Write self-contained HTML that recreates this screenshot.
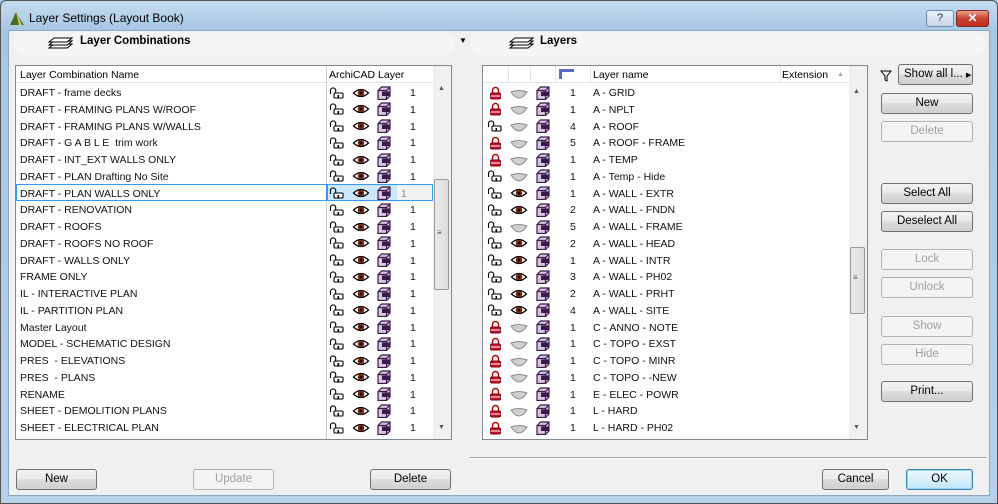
<!DOCTYPE html>
<html><head><meta charset="utf-8">
<style>
*{box-sizing:border-box;margin:0;padding:0}
body{width:998px;height:504px;overflow:hidden;background:#a9c8e4;font-family:"Liberation Sans",sans-serif;font-size:11px;color:#000;position:relative}
.frame{position:absolute;left:0;top:0;width:998px;height:504px;background:linear-gradient(#c4dbf0,#a7c6e3 30px,#b6d1ea);border:1px solid #555;border-radius:6px 6px 0 0}
.title{position:absolute;left:29px;top:11px;font-size:12px;color:#000}
.client{position:absolute;left:8px;top:30px;width:982px;height:466px;background:#f0f0f0;border:1px solid #8aa7c4}
.a{position:absolute}
.hbar{position:absolute;top:31px;height:25px;background:#f5f5f5;border-radius:12px}
.hb{font-weight:bold;font-size:11.5px}
.list{position:absolute;background:#fff;border:1px solid #828790}
.hdr{position:absolute;left:0;top:0;height:17px;background:#fff;border-bottom:1px solid #e5e5e5}
.row{position:absolute;height:16.75px;line-height:18px;white-space:nowrap;font-size:10.5px;color:#111}
.btn{position:absolute;height:21px;border:1px solid #707070;border-radius:3px;background:linear-gradient(#f2f2f2 0,#ebebeb 45%,#dddddd 50%,#cfcfcf);text-align:center;line-height:19px;font-size:11.5px;color:#000}
.dis{border-color:#adb2b5;background:#f4f4f4;color:#a0a0a0}
.sb{position:absolute;background:#f0f0f0}
.thumb{position:absolute;border:1px solid #979797;border-radius:2px;background:linear-gradient(90deg,#eaeaea,#dcdcdc)}
svg.i{position:absolute;width:18px;height:14px}
</style></head><body>
<svg width="0" height="0" style="position:absolute">
<defs>
<symbol id="lo" viewBox="0 0 18 14"><path d="M1.5 8V4.5a2.6 2.6 0 0 1 5.2 0V7" fill="none" stroke="#000" stroke-width="1.1"/><rect x="5" y="7" width="9" height="5" rx="1" fill="#fff" stroke="#000" stroke-width="1.1"/><rect x="8.5" y="9" width="1.6" height="2.5" fill="#000"/></symbol>
<symbol id="lc" viewBox="0 0 18 14"><path d="M5.5 7V4.5a3 3 0 0 1 6 0V7" fill="none" stroke="#b00" stroke-width="1.4"/><rect x="3.5" y="7" width="10" height="6" rx="1.5" fill="#c8102e" stroke="#7a0010"/><rect x="3.5" y="9.5" width="10" height="1" fill="#fff"/></symbol>
<symbol id="ey" viewBox="0 0 18 14"><path d="M1.5 7Q9 0 16.5 7Q9 14 1.5 7Z" fill="#fff" stroke="#000" stroke-width="1.2"/><circle cx="9" cy="7" r="3.3" fill="#7a2a10"/><circle cx="9" cy="7" r="1.3" fill="#000"/></symbol>
<symbol id="eg" viewBox="0 0 18 14"><path d="M1 6Q9 3 17 6Q13 12 9 12Q5 12 1 6Z" fill="#cfcfcf" stroke="#8a8a8a"/></symbol>
<symbol id="bx" viewBox="0 0 18 14"><path d="M3 4.5L6.5 1H15V10L11.5 13.5H3Z" fill="#d9c6e0" stroke="#3a1a4a" stroke-width="1.2"/><path d="M3 4.5H11.5V13.5M11.5 4.5L15 1" fill="none" stroke="#3a1a4a" stroke-width="1.2"/><rect x="7" y="5.5" width="8" height="4.5" fill="#3a1a4a"/></symbol>
</defs></svg>
<div class="frame"></div>
<svg class="a" style="left:9px;top:10px" width="16" height="16"><path d="M1 15L7 2L9 6L15 15Z" fill="#4a6a2a"/><path d="M7 2L13 15H10Z" fill="#d8c060"/></svg>
<div class="title">Layer Settings (Layout Book)</div>
<div class="a" style="left:926px;top:10px;width:28px;height:17px;border:1px solid #6d8bb0;border-radius:3px;background:linear-gradient(#e8f0f8,#c5d6ea);text-align:center;font-size:11px;line-height:15px;color:#234">?</div>
<div class="a" style="left:956px;top:10px;width:33px;height:17px;border:1px solid #7a2a20;border-radius:3px;background:linear-gradient(#e8a090,#c84030 50%,#c03020);text-align:center;font-size:12px;font-weight:bold;line-height:15px;color:#fff">✕</div>
<div class="client"></div>
<div class="hbar" style="left:14px;width:440px"></div>
<div class="hbar" style="left:470px;width:515px"></div>
<svg class="a" style="left:46px;top:36px" width="28" height="16"><g fill="#fff" stroke="#000" stroke-width="1"><path d="M3 12L8 8H26L21 12Z"/><path d="M3 9L8 5H26L21 9Z"/><path d="M3 6L8 2H26L21 6Z"/></g></svg>
<div class="a hb" style="left:80px;top:35px">Layer Combinations</div>
<div class="a" style="left:459px;top:36px;font-size:8px">▼</div>
<svg class="a" style="left:507px;top:36px" width="28" height="16"><g fill="#fff" stroke="#000" stroke-width="1"><path d="M3 12L8 8H26L21 12Z"/><path d="M3 9L8 5H26L21 9Z"/><path d="M3 6L8 2H26L21 6Z"/></g></svg>
<div class="a hb" style="left:540px;top:35px">Layers</div>

<!-- left list -->
<div class="list" style="left:15px;top:65px;width:437px;height:375px">
<div class="hdr" style="width:417px"></div>
<div class="a" style="left:4px;top:3px;font-size:10.5px">Layer Combination Name</div>
<div class="a" style="left:310px;top:0;width:1px;height:373px;background:#ccc"></div>
<div class="a" style="left:313px;top:3px;font-size:10.5px">ArchiCAD Layer</div>
<div class="sb" style="left:417px;top:0;width:18px;height:373px"></div>
<div class="a" style="left:422px;top:19px;font-size:7px;color:#555">▲</div>
<div class="a" style="left:422px;top:358px;font-size:7px;color:#555">▼</div>
<div class="thumb" style="left:418px;top:113px;width:15px;height:111px"></div>
<div class="a" style="left:421px;top:162px;font-size:8px;color:#555">≡</div>
</div>
<div class="a" style="left:16px;top:184px;width:311px;height:17px;border:1px solid #3399ff"></div>
<div class="a" style="left:327px;top:184px;width:106px;height:17px;background:#cce8ff;border:1px solid #3399ff"></div>
<div class="a" style="left:397px;top:185px;width:35px;height:15px;background:#f2f2f2"></div>
<div id="L"></div>

<!-- right list -->
<div class="list" style="left:482px;top:65px;width:386px;height:375px">
<div class="hdr" style="width:367px"></div>
<div class="a" style="left:25px;top:0;width:1px;height:17px;background:#e5e5e5"></div>
<div class="a" style="left:47px;top:0;width:1px;height:17px;background:#e5e5e5"></div>
<div class="a" style="left:72px;top:0;width:1px;height:17px;background:#e5e5e5"></div>
<div class="a" style="left:107px;top:0;width:1px;height:17px;background:#e5e5e5"></div>
<div class="a" style="left:297px;top:0;width:1px;height:17px;background:#e5e5e5"></div>
<svg class="a" style="left:76px;top:3px" width="16" height="11"><rect x="0" y="0" width="15" height="3" fill="#5a6ac8"/><rect x="0" y="0" width="3" height="10" fill="#5a6ac8"/></svg>
<div class="a" style="left:110px;top:3px;font-size:10.5px">Layer name</div>
<div class="a" style="left:299px;top:3px;font-size:10.5px">Extension</div>
<div class="a" style="left:354px;top:5px;font-size:7px;color:#aaa">▲</div>
<div class="sb" style="left:366px;top:0;width:18px;height:373px"></div>
<div class="a" style="left:370px;top:22px;font-size:7px;color:#555">▲</div>
<div class="a" style="left:370px;top:358px;font-size:7px;color:#555">▼</div>
<div class="thumb" style="left:367px;top:181px;width:15px;height:67px"></div>
<div class="a" style="left:370px;top:207px;font-size:8px;color:#555">≡</div>
</div>
<div id="R"></div>

<!-- right buttons -->
<svg class="a" style="left:880px;top:70px" width="12" height="12"><path d="M1 1H11L7 6V11L5 10V6Z" fill="none" stroke="#000"/></svg>
<div class="btn" style="left:898px;top:64px;width:75px;height:21px;text-align:left;padding-left:5px">Show all l... <span style="font-size:7px">▶</span></div>
<div class="btn" style="left:881px;top:93px;width:92px">New</div>
<div class="btn dis" style="left:881px;top:121px;width:92px">Delete</div>
<div class="btn" style="left:881px;top:183px;width:92px">Select All</div>
<div class="btn" style="left:881px;top:211px;width:92px">Deselect All</div>
<div class="btn dis" style="left:881px;top:249px;width:92px">Lock</div>
<div class="btn dis" style="left:881px;top:277px;width:92px">Unlock</div>
<div class="btn dis" style="left:881px;top:316px;width:92px">Show</div>
<div class="btn dis" style="left:881px;top:344px;width:92px">Hide</div>
<div class="btn" style="left:881px;top:381px;width:92px">Print...</div>

<div class="a" style="left:470px;top:457px;width:516px;height:1px;background:#a0a0a0"></div>
<div class="a" style="left:470px;top:458px;width:516px;height:1px;background:#fff"></div>
<div class="btn" style="left:16px;top:469px;width:81px">New</div>
<div class="btn dis" style="left:193px;top:469px;width:81px">Update</div>
<div class="btn" style="left:370px;top:469px;width:81px">Delete</div>
<div class="btn" style="left:822px;top:469px;width:67px">Cancel</div>
<div class="btn" style="left:906px;top:469px;width:67px;border-color:#3c7fb1;box-shadow:inset 0 0 0 1px #9fd6f5;background:linear-gradient(#eaf6fd,#d9f0fc 50%,#bee6fd)">OK</div>

<script>
var L=["DRAFT - frame decks","DRAFT - FRAMING PLANS W/ROOF","DRAFT - FRAMING PLANS W/WALLS","DRAFT - G A B L E &nbsp;trim work","DRAFT - INT_EXT WALLS ONLY","DRAFT - PLAN Drafting No Site","DRAFT - PLAN WALLS ONLY","DRAFT - RENOVATION","DRAFT - ROOFS","DRAFT - ROOFS NO ROOF","DRAFT - WALLS ONLY","FRAME ONLY","IL - INTERACTIVE PLAN","IL - PARTITION PLAN","Master Layout","MODEL - SCHEMATIC DESIGN","PRES &nbsp;- ELEVATIONS","PRES &nbsp;- PLANS","RENAME","SHEET - DEMOLITION PLANS","SHEET - ELECTRICAL PLAN"];
var h="";
for(var i=0;i<L.length;i++){var y=84+i*16.75;
h+='<div class="row" style="left:20px;top:'+y+'px">'+L[i]+'</div>';
h+='<svg class="i" style="left:329px;top:'+(y+1.5)+'px"><use href="#lo"/></svg><svg class="i" style="left:352px;top:'+(y+1.5)+'px"><use href="#ey"/></svg><svg class="i" style="left:375px;top:'+(y+1.5)+'px"><use href="#bx"/></svg>';
h+='<div class="row" style="left:'+(i==6?401:410)+'px;top:'+y+'px;'+(i==6?'color:#888':'')+'">1</div>';}
document.getElementById('L').innerHTML=h;
var R=[["lc","eg",1,"A - GRID"],["lc","eg",1,"A - NPLT"],["lo","eg",4,"A - ROOF"],["lc","eg",5,"A - ROOF - FRAME"],["lc","eg",1,"A - TEMP"],["lo","eg",1,"A - Temp - Hide"],["lo","ey",1,"A - WALL - EXTR"],["lo","ey",2,"A - WALL - FNDN"],["lo","eg",5,"A - WALL - FRAME"],["lo","ey",2,"A - WALL - HEAD"],["lo","ey",1,"A - WALL - INTR"],["lo","ey",3,"A - WALL - PH02"],["lo","ey",2,"A - WALL - PRHT"],["lo","ey",4,"A - WALL - SITE"],["lc","eg",1,"C - ANNO - NOTE"],["lc","eg",1,"C - TOPO - EXST"],["lc","eg",1,"C - TOPO - MINR"],["lc","eg",1,"C - TOPO - -NEW"],["lc","eg",1,"E - ELEC - POWR"],["lc","eg",1,"L - HARD"],["lc","eg",1,"L - HARD - PH02"]];
h="";
for(var i=0;i<R.length;i++){var y=84+i*16.75,r=R[i];
h+='<svg class="i" style="left:487px;top:'+(y+1.5)+'px"><use href="#'+r[0]+'"/></svg><svg class="i" style="left:510px;top:'+(y+1.5)+'px"><use href="#'+r[1]+'"/></svg><svg class="i" style="left:534px;top:'+(y+1.5)+'px"><use href="#bx"/></svg>';
h+='<div class="row" style="left:570px;top:'+y+'px">'+r[2]+'</div><div class="row" style="left:593px;top:'+y+'px">'+r[3]+'</div>';}
document.getElementById('R').innerHTML=h;
</script>
</body></html>
